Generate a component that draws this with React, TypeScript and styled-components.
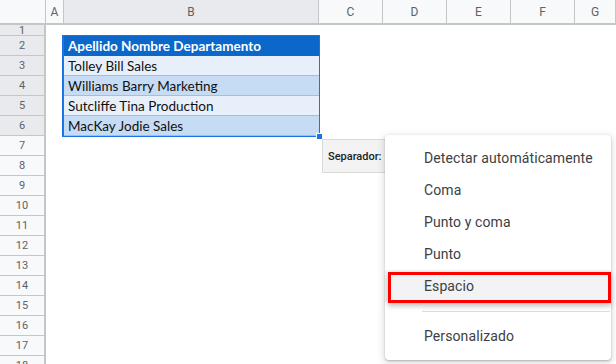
import React from "react";
import styled, {createGlobalStyle} from "styled-components";

const GlobalStyle = createGlobalStyle`
  html, body {
    margin: 0;
    padding: 0;
    background: #ffffff;
    overflow: hidden;
  }

  body {
    font-family: Roboto, "Liberation Sans", sans-serif;
  }
`

const Sheet = styled.div`
  position: relative;
  width: 616px;
  height: 364px;
  display: grid;
  grid-template-columns: 46px 18px 255px 64px 64px 64px 64px 1fr;
  grid-template-rows: 25px 11px repeat(17, 20px);
  overflow: hidden;
`

const Corner = styled.div`
  grid-column: 1;
  grid-row: 1;
  background: #f8f9fa;
  border-right: 2px solid #c4c7c5;
  border-bottom: 2px solid #c4c7c5;
  margin-right: -1px;
`

const ColHeader = styled.div<{ active?: boolean }>`
  grid-row: 1;
  display: flex;
  align-items: center;
  justify-content: center;
  background: ${({active}) => active ? '#e8eaed' : '#f8f9fa'};
  border-right: 1px solid #c4c7c5;
  border-bottom: 2px solid #c4c7c5;
  font-size: 12px;
  color: #5f6368;
  padding-top: 1px;
`

const RowHeader = styled.div<{ active?: boolean }>`
  grid-column: 1;
  display: flex;
  align-items: center;
  justify-content: center;
  background: ${({active}) => active ? '#e8eaed' : '#f8f9fa'};
  border-right: 2px solid #c4c7c5;
  border-bottom: 1px solid #c4c7c5;
  font-size: 11px;
  color: #5f6368;
  line-height: 1;
  overflow: hidden;
`

const Table = styled.div`
  position: relative;
  grid-column: 3;
  grid-row: 3 / 8;
  display: flex;
  flex-direction: column;
  outline: 1px solid #1a73e8;
  border-left: 1px solid #1a73e8;
  margin-left: -1px;
  font-family: Lato, "Open Sans", sans-serif;
  font-size: 13.5px;
`

const TableRow = styled.div<{ tone: 'head' | 'light' | 'dark' }>`
  flex: 1;
  display: flex;
  align-items: flex-end;
  padding: 0 0 1px 4px;
  border-bottom: 1px solid ${({tone}) => tone === 'head' ? '#0b67c9' : '#9cc0ea'};
  background: ${({tone}) => tone === 'head' ? '#0b67c9' : tone === 'light' ? '#e7effb' : '#c6dbf4'};
  color: ${({tone}) => tone === 'head' ? '#ffffff' : '#111111'};
  font-weight: ${({tone}) => tone === 'head' ? 700 : 400};
  white-space: nowrap;

  &:last-child {
    border-bottom: none;
  }
`

const FillHandle = styled.div`
  position: absolute;
  right: -4px;
  bottom: -4px;
  width: 7px;
  height: 7px;
  background: #1a73e8;
  border: 1px solid #ffffff;
  box-sizing: border-box;
`

const SeparatorBox = styled.div`
  position: absolute;
  left: 322px;
  top: 139px;
  width: 80px;
  height: 34px;
  box-sizing: border-box;
  display: flex;
  align-items: center;
  padding-left: 5px;
  background: #f3f3f3;
  border: 1px solid #dadada;
  font-size: 11px;
  font-weight: 500;
  color: #222222;
`

const Menu = styled.div`
  position: absolute;
  left: 385px;
  top: 135px;
  width: 226px;
  padding: 7px 0 8px;
  background: #ffffff;
  border-radius: 4px;
  box-shadow: 0 2px 6px 2px rgba(60, 64, 67, 0.15), 0 1px 2px rgba(60, 64, 67, 0.3);
  font-size: 14px;
  color: #3c4043;
`

const MenuItem = styled.div<{ highlighted?: boolean }>`
  position: relative;
  height: 32px;
  display: flex;
  align-items: center;
  padding-left: 39px;
  background: ${({highlighted}) => highlighted ? '#f1f3f4' : 'transparent'};
  letter-spacing: 0.1px;
`

const Callout = styled.div`
  position: absolute;
  left: 3px;
  right: 0;
  top: 2px;
  bottom: -1px;
  border: 3px solid #ff0000;
  box-shadow: 0 3px 5px rgba(0, 0, 0, 0.25);
  pointer-events: none;
`

const Divider = styled.div`
  height: 1px;
  margin: 9px 1px 8px 37px;
  background: #dadce0;
`

const columns = ['A', 'B', 'C', 'D', 'E', 'F', 'G']

const rows = [
    {text: 'Apellido Nombre Departamento', tone: 'head' as const},
    {text: 'Tolley Bill Sales', tone: 'light' as const},
    {text: 'Williams Barry Marketing', tone: 'dark' as const},
    {text: 'Sutcliffe Tina Production', tone: 'light' as const},
    {text: 'MacKay Jodie Sales', tone: 'dark' as const},
]

const options = ['Detectar automáticamente', 'Coma', 'Punto y coma', 'Punto', 'Espacio']

const App: React.FC = () => {
    return (
        <>
            <GlobalStyle/>
            <Sheet>
                <Corner/>
                {columns.map((c, i) => (
                    <ColHeader key={c} active={c === 'B'} style={{gridColumn: i + 2}}>{c}</ColHeader>
                ))}
                {Array.from({length: 18}, (_, i) => (
                    <RowHeader key={i} active={i < 6} style={{gridRow: i + 2}}>{i + 1}</RowHeader>
                ))}
                <Table>
                    {rows.map(r => (
                        <TableRow key={r.text} tone={r.tone}>{r.text}</TableRow>
                    ))}
                    <FillHandle/>
                </Table>
                <SeparatorBox>Separador:</SeparatorBox>
                <Menu>
                    {options.map(o => (
                        <MenuItem key={o} highlighted={o === 'Espacio'}>
                            {o}
                            {o === 'Espacio' && <Callout/>}
                        </MenuItem>
                    ))}
                    <Divider/>
                    <MenuItem>Personalizado</MenuItem>
                </Menu>
            </Sheet>
        </>
    )
}

export default App
